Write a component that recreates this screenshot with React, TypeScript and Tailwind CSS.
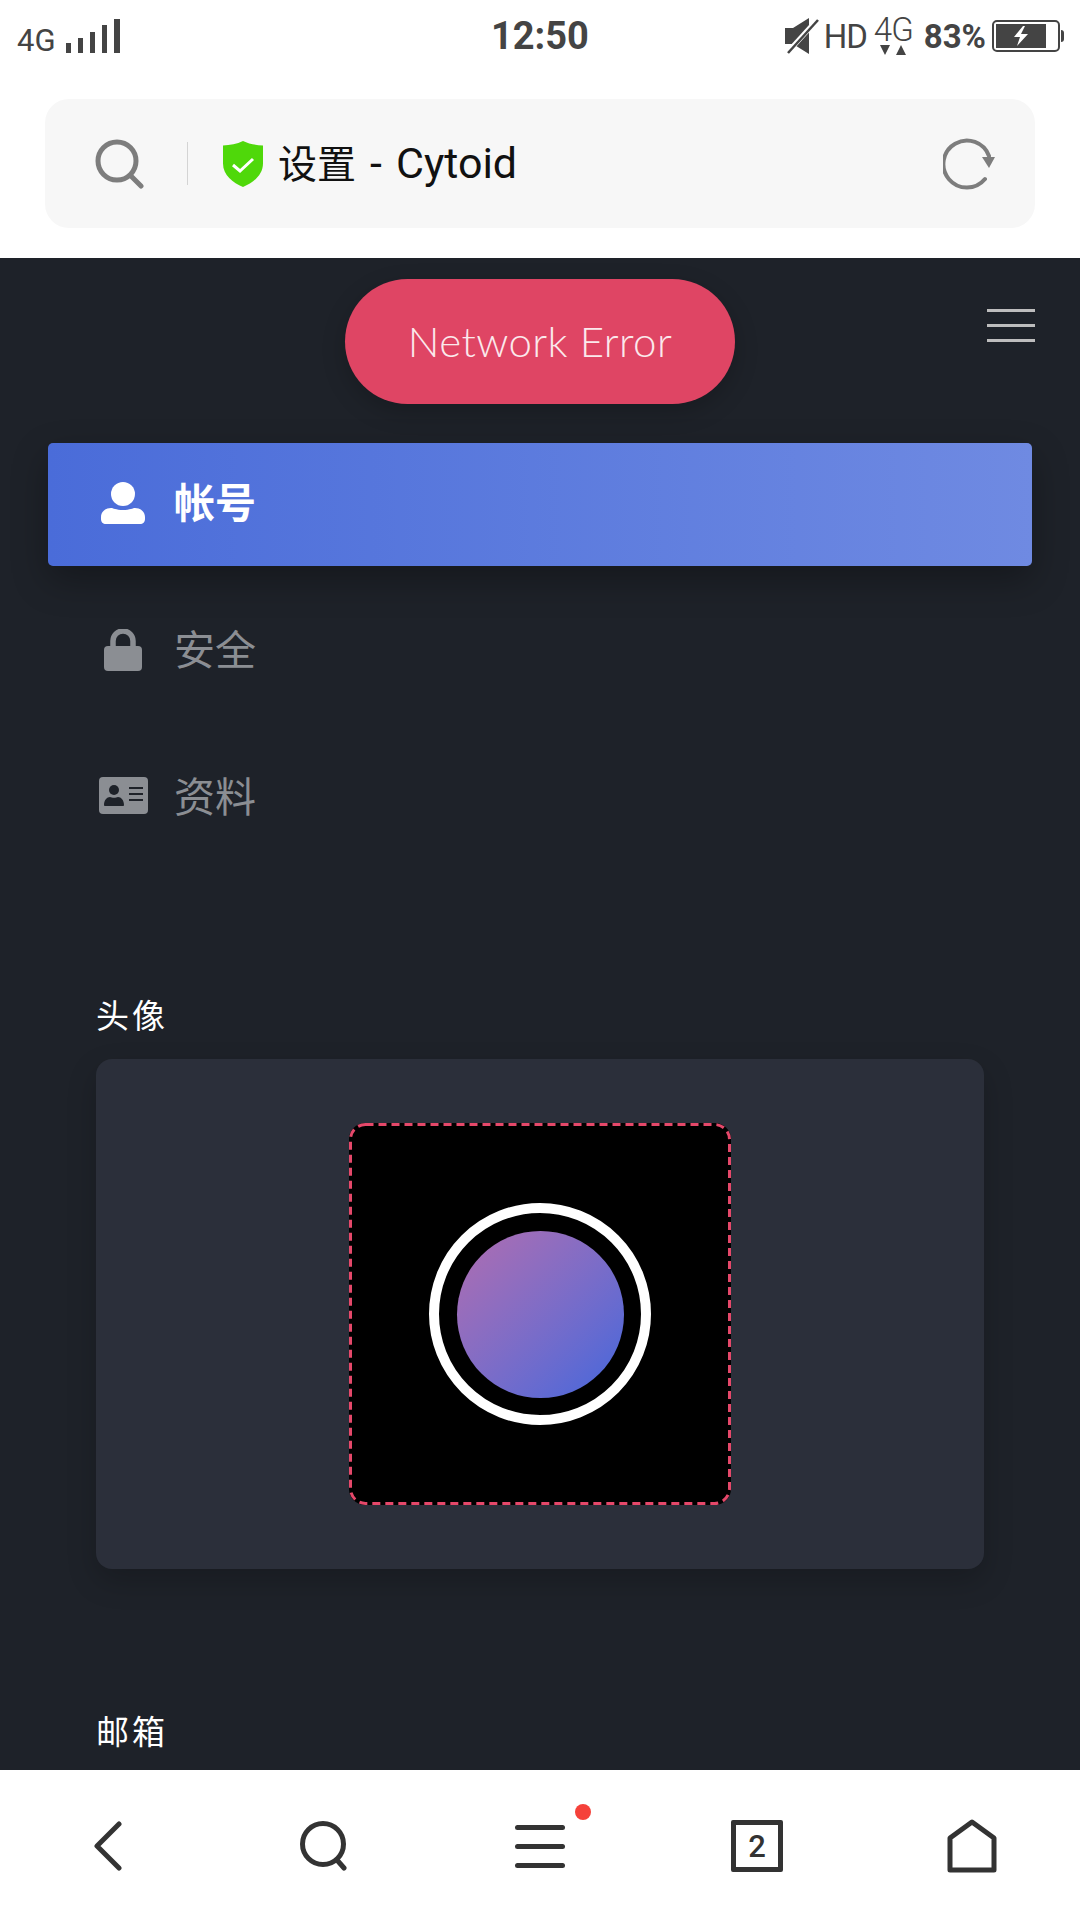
const cjk = "font-['Roboto','Noto_Sans_CJK_SC',sans-serif]";

function StatusBar() {
    return (
        <div className="relative flex h-[70px] items-center justify-between pl-[17px] pr-[16px] pt-[2px] text-[#444]">
            <div className="flex items-center gap-[10px]">
                <span className="font-['Roboto',sans-serif] text-[31px] leading-none mt-[8px]">4G</span>
                <svg width="54" height="34" viewBox="0 0 54 34" className="fill-[#444] mb-[1px]">
                    <rect x="0" y="24" width="5" height="10" />
                    <rect x="12" y="19" width="5" height="15" />
                    <rect x="24" y="13" width="5" height="21" />
                    <rect x="36" y="6" width="5" height="28" />
                    <rect x="48" y="0" width="6" height="34" />
                </svg>
            </div>
            <span className="absolute left-[491px] top-[14px] font-['Roboto',sans-serif] text-[38px] font-bold leading-[44px]">12:50</span>
            <div className="flex items-center">
                <svg width="34" height="36" viewBox="0 0 34 36" className="fill-[#444]">
                    <path d="M0 10h8L24 0v36L8 26H0z" />
                    <path d="M2 35L32 2" stroke="#fff" strokeWidth="5" />
                    <path d="M3 35L33 2" stroke="#444" strokeWidth="2.500" />
                </svg>
                <span className="ml-[5px] font-['Roboto',sans-serif] text-[33px] leading-none tracking-[-1px]">HD</span>
                <div className="ml-[7px] flex flex-col items-center -mt-[3px]">
                    <span className="font-['Roboto',sans-serif] text-[33px] font-light leading-[30px] tracking-[-1px]">4G</span>
                    <svg width="26" height="10" viewBox="0 0 26 10" className="fill-[#444]">
                        <path d="M0 0h10L5 10zM16 10h10L21 0z" />
                    </svg>
                </div>
                <span className="ml-[11px] font-['Roboto',sans-serif] text-[33px] font-bold leading-none">83%</span>
                <div className="ml-[6px] flex items-center">
                    <div className="flex h-[32px] w-[68px] items-center rounded-[5px] border-[2px] border-[#444] p-[2px]">
                        <div className="flex h-full w-[50px] items-center justify-center bg-[#444]">
                            <svg width="18" height="20" viewBox="0 0 18 20" className="fill-white">
                                <path d="M11 0L2 11h6l-3 9 11-12h-7l4-8z" />
                            </svg>
                        </div>
                    </div>
                    <div className="ml-[1px] h-[12px] w-[3px] rounded-r-full bg-[#444]" />
                </div>
            </div>
        </div>
    );
}

function AddressBar() {
    return (
        <div className="mx-[45px] mt-[29px] flex h-[129px] items-center rounded-[24px] bg-[#f7f7f7]">
            <svg width="50" height="50" viewBox="0 0 50 50" fill="none" stroke="#7d7d7d" strokeWidth="5" strokeLinecap="round" className="ml-[50px]">
                <circle cx="22" cy="22" r="19" />
                <path d="M36 37l10 10" />
            </svg>
            <div className="ml-[42px] h-[43px] w-[1px] bg-[#d4d4d4]" />
            <svg width="42" height="46" viewBox="0 0 42 46" className="ml-[34px]">
                <path d="M21 0c6 3 13 4 20 4.500v18C41 34 31 42 21 46 11 42 1 34 1 22.500v-18C8 4 15 3 21 0z" fill="#4fd80a" />
                <path d="M11 24l7 6 13-12" fill="none" stroke="#fff" strokeWidth="3" />
            </svg>
            <span className={`ml-[14px] ${cjk} text-[39px] leading-none text-[#111]`}>
                设置<span className="ml-[14px] text-[43px]">-</span><span className="ml-[14px] text-[43px]">Cytoid</span>
            </span>
            <svg width="54" height="52" viewBox="0 0 54 52" fill="none" className="ml-auto mr-[38px]">
                <path d="M42 41A23.500 23.500 0 1 1 46 18" stroke="#7d7d7d" strokeWidth="4" strokeLinecap="round" />
                <path d="M39 19h13l-6 11z" fill="#7d7d7d" />
            </svg>
        </div>
    );
}

function UserIcon() {
    return (
        <svg width="44" height="42" viewBox="0 0 44 42" className="fill-current">
            <circle cx="22" cy="12" r="12" />
            <path d="M0 37v-2c0-5 4-9 10-9 2 0 5 2 12 2s10-2 12-2c6 0 10 4 10 9v2c0 3-2 5-5 5H5c-3 0-5-2-5-5z" />
        </svg>
    );
}

function LockIcon() {
    return (
        <svg width="38" height="42" viewBox="0 0 38 42" className="fill-current">
            <path d="M9 20v-8a10 10 0 0 1 20 0v8" fill="none" stroke="currentColor" strokeWidth="5.500" />
            <rect x="0" y="17" width="38" height="25" rx="4" />
        </svg>
    );
}

function CardIcon() {
    return (
        <svg width="49" height="37" viewBox="0 0 49 37" className="-mt-[2px]">
            <rect width="49" height="37" rx="4" fill="currentColor" />
            <circle cx="15" cy="13" r="5" fill="#1e2229" />
            <path d="M5 28c0-5 3-8 6-8 2 1 6 1 8 0 3 0 6 3 6 8 0 1-1 1-1 1H6s-1 0-1-1z" fill="#1e2229" />
            <path d="M30 11h14M30 17h14M30 23h14" stroke="#1e2229" strokeWidth="2" />
        </svg>
    );
}

function SideTab({ icon, label, active }: { icon: React.ReactNode; label: string; active?: boolean }) {
    return (
        <div
            className={
                active
                    ? "flex h-[123px] items-center rounded-[5px] bg-gradient-to-r from-[#4a6cd9] to-[#6f8ae2] text-white shadow-[0_14px_36px_rgba(0,0,0,0.3)]"
                    : "flex h-[123px] items-center text-[#8b8e93]"
            }
        >
            <div className="flex w-[126px] justify-center pl-[24px] -mt-[4px]">{icon}</div>
            <span className={`${cjk} text-[41px] leading-none ${active ? "font-bold" : ""}`}>{label}</span>
        </div>
    );
}

function Avatar() {
    return (
        <div className="relative flex h-[382px] w-[382px] items-center justify-center rounded-[16px] bg-black">
            <svg width="382" height="382" viewBox="0 0 382 382" fill="none" className="absolute inset-0">
                <rect x="1.500" y="1.500" width="379" height="379" rx="15" stroke="#e5486a" strokeWidth="3" strokeDasharray="8 5" />
            </svg>
            <div className="flex h-[222px] w-[222px] items-center justify-center rounded-full border-[10px] border-white">
                <div className="h-[167px] w-[167px] rounded-full bg-gradient-to-br from-[#b06cb0] to-[#4066dc]" />
            </div>
        </div>
    );
}

function BottomNav() {
    return (
        <div className="grid h-[150px] grid-cols-5 items-center bg-white pt-[2px] text-[#333]">
            <div className="flex justify-center">
                <svg width="30" height="50" viewBox="0 0 30 50" fill="none" stroke="#333" strokeWidth="5" strokeLinecap="round" strokeLinejoin="round">
                    <path d="M26 3L4 25l22 22" />
                </svg>
            </div>
            <div className="flex justify-center">
                <svg width="48" height="50" viewBox="0 0 48 50" fill="none" stroke="#333" strokeWidth="5" strokeLinecap="round">
                    <circle cx="23" cy="23" r="20.500" />
                    <path d="M37 39l7 8" />
                </svg>
            </div>
            <div className="relative flex justify-center">
                <div className="flex w-[50px] flex-col gap-[14px]">
                    <div className="h-[5px] rounded-full bg-[#333]" />
                    <div className="h-[5px] rounded-full bg-[#333]" />
                    <div className="h-[5px] rounded-full bg-[#333]" />
                </div>
                <div className="absolute left-[143px] top-[-21px] h-[16px] w-[16px] rounded-full bg-[#f5413a]" />
            </div>
            <div className="flex justify-center pl-[2px]">
                <div className="flex h-[52px] w-[52px] items-center justify-center rounded-[2px] border-[5px] border-[#333]">
                    <span className="font-['Roboto',sans-serif] text-[31px] font-medium leading-none">2</span>
                </div>
            </div>
            <div className="flex justify-center">
                <svg width="50" height="54" viewBox="0 0 50 54" fill="none" stroke="#333" strokeWidth="5" strokeLinejoin="round">
                    <path d="M25 3L3 19v32h44V19z" />
                </svg>
            </div>
        </div>
    );
}

export default function App() {
    return (
        <div className="flex h-[1920px] w-[1080px] flex-col overflow-hidden bg-white">
            <div className="h-[258px] shrink-0">
                <StatusBar />
                <AddressBar />
            </div>

            <div className="relative min-h-0 flex-1 overflow-hidden bg-[#1e2229]">
                {/* Toast and menu button */}
                <div className="flex justify-center pt-[21px]">
                    <div className="flex h-[125px] w-[390px] items-center justify-center rounded-full bg-[#df4564] shadow-[0_8px_24px_rgba(0,0,0,0.2)]">
                        <span className="font-['Lato',sans-serif] text-[42px] font-light tracking-[0.4px] text-[#fbe9ec]">Network Error</span>
                    </div>
                </div>
                <div className="absolute right-[45px] top-[51px] flex w-[48px] flex-col gap-[12px]">
                    <div className="h-[3px] bg-[#bdbdbd]" />
                    <div className="h-[3px] bg-[#bdbdbd]" />
                    <div className="h-[3px] bg-[#bdbdbd]" />
                </div>

                {/* Tabs */}
                <div className="mx-[48px] mt-[39px] flex flex-col gap-[24px]">
                    <SideTab icon={<UserIcon />} label="帐号" active />
                    <SideTab icon={<LockIcon />} label="安全" />
                    <SideTab icon={<CardIcon />} label="资料" />
                </div>

                {/* Avatar */}
                <div className="mx-[96px] mt-[135px]">
                    <div className={`${cjk} text-[33px] leading-[44px] tracking-[3px] text-white`}>头像</div>
                    <div className="mt-[20px] flex h-[510px] items-center justify-center rounded-[16px] bg-[#2b2f3a] shadow-[0_12px_30px_rgba(0,0,0,0.2)]">
                        <Avatar />
                    </div>
                    <div className={`${cjk} mt-[142px] text-[33px] leading-[44px] tracking-[3px] text-white`}>邮箱</div>
                </div>
            </div>

            <BottomNav />
        </div>
    );
}
